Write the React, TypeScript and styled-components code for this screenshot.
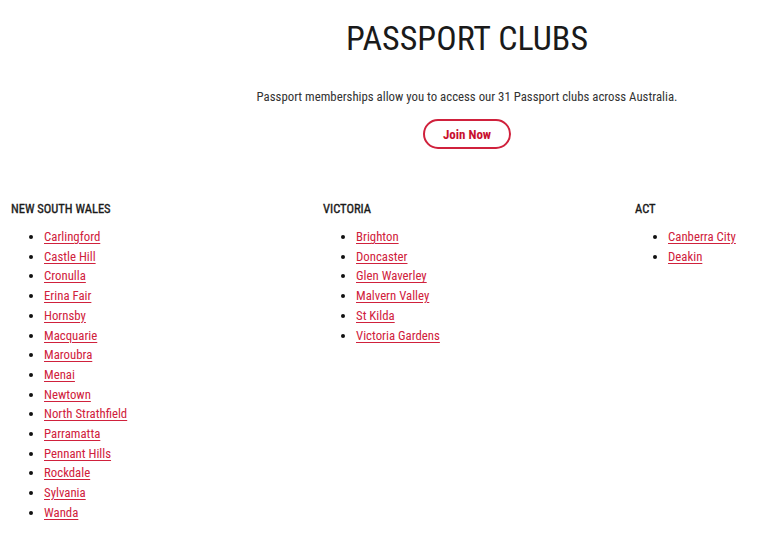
import React from "react";
import styled, { createGlobalStyle } from "styled-components";

const GlobalStyle = createGlobalStyle`
  html, body { margin: 0; padding: 0; background: #ffffff; overflow: hidden; }
  body { font-family: "Roboto Condensed", "Liberation Sans", sans-serif; color: #222; }
`;

const Page = styled.div`
  width: 912px;
  padding: 0 0 0 11px;
`;

const Hero = styled.section`
  display: flex;
  flex-direction: column;
  align-items: center;
`;

const Title = styled.h1`
  margin: 16px 0 0;
  font-size: 34px;
  line-height: 44px;
  font-weight: 400;
  color: #1a1a1a;
`;

const Intro = styled.p`
  margin: 27px 0 0;
  font-size: 12.8px;
  line-height: 20px;
  color: #333;
`;

const JoinButton = styled.a`
  margin-top: 12px;
  display: inline-flex;
  align-items: center;
  justify-content: center;
  width: 88px;
  height: 30px;
  box-sizing: border-box;
  border: 2px solid #d0213c;
  border-radius: 16px;
  color: #c8102e;
  font-weight: 700;
  font-size: 13px;
  text-decoration: none;
`;

const Regions = styled.div`
  display: grid;
  grid-template-columns: repeat(3, 288px);
  column-gap: 24px;
  margin-top: 52px;
`;

const Region = styled.div``;

const RegionTitle = styled.h3`
  margin: 0;
  font-size: 12.5px;
  line-height: 16px;
  font-weight: 400;
  -webkit-text-stroke: 0.35px #1a1a1a;
  color: #1a1a1a;
  text-transform: uppercase;
`;

const ClubList = styled.ul`
  margin: 10px 0 0;
  padding: 0 0 0 33px;
  list-style: disc;
  font-size: 12.8px;
  line-height: 19.7px;
  li::marker { color: #111; }
`;

const ClubLink = styled.a`
  color: #d0213c;
  text-decoration: underline;
  text-underline-offset: 2px;
`;

const regions: { name: string; clubs: string[] }[] = [
  {
    name: "New South Wales",
    clubs: [
      "Carlingford",
      "Castle Hill",
      "Cronulla",
      "Erina Fair",
      "Hornsby",
      "Macquarie",
      "Maroubra",
      "Menai",
      "Newtown",
      "North Strathfield",
      "Parramatta",
      "Pennant Hills",
      "Rockdale",
      "Sylvania",
      "Wanda",
    ],
  },
  {
    name: "Victoria",
    clubs: ["Brighton", "Doncaster", "Glen Waverley", "Malvern Valley", "St Kilda", "Victoria Gardens"],
  },
  { name: "ACT", clubs: ["Canberra City", "Deakin"] },
];

export default function App() {
  return (
    <>
      <GlobalStyle />
      <Page>
        <Hero>
          <Title>PASSPORT CLUBS</Title>
          <Intro>Passport memberships allow you to access our 31 Passport clubs across Australia.</Intro>
          <JoinButton href="#">Join Now</JoinButton>
        </Hero>
        <Regions>
          {regions.map((r) => (
            <Region key={r.name}>
              <RegionTitle>{r.name}</RegionTitle>
              <ClubList>
                {r.clubs.map((c) => (
                  <li key={c}>
                    <ClubLink href="#">{c}</ClubLink>
                  </li>
                ))}
              </ClubList>
            </Region>
          ))}
        </Regions>
      </Page>
    </>
  );
}
